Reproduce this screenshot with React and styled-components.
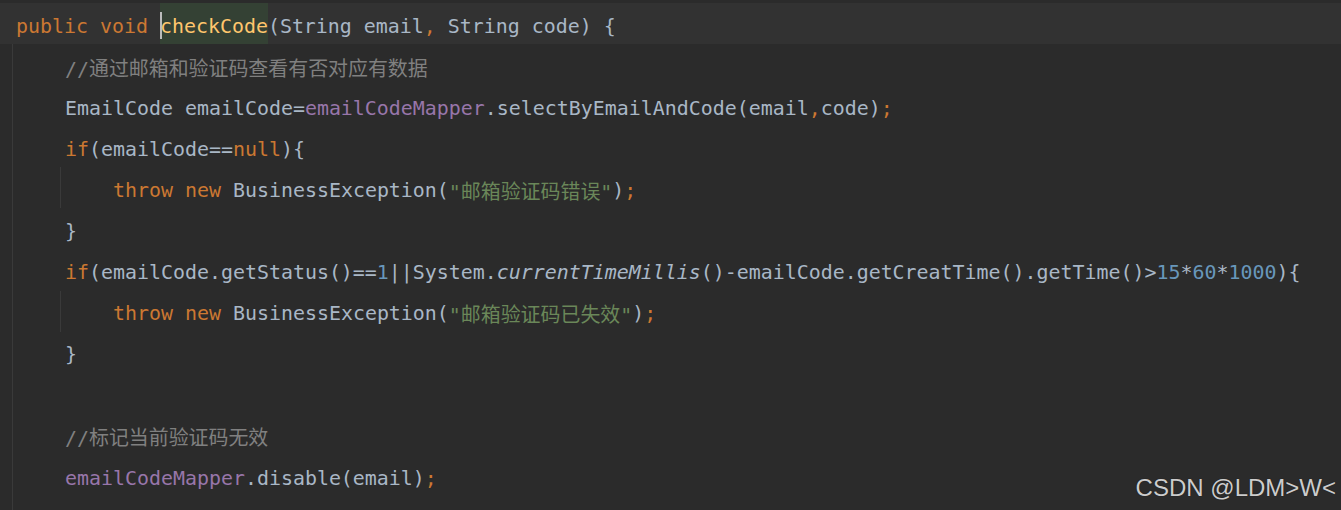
import React from "react";
import styled, { createGlobalStyle } from "styled-components";

const GlobalStyle = createGlobalStyle`
  html, body {
    margin: 0;
    padding: 0;
    background: #2b2b2b;
    overflow: hidden;
  }
`;

const colors = {
  kw: "#cc7832",
  txt: "#a9b7c6",
  fn: "#ffc66d",
  cmt: "#808080",
  str: "#6a8759",
  num: "#6897bb",
  field: "#9876aa",
};

function App() {
  return (
    <>
      <GlobalStyle />
      <Editor>
        <Line $pad={16} $current>
          <Tok $kind="kw">public void </Tok>
          <Caret />
          <Tok $kind="fn" $mark>checkCode</Tok>
          <Tok $kind="txt">(String email</Tok>
          <Tok $kind="kw">,</Tok>
          <Tok $kind="txt"> String code) {"{"}</Tok>
        </Line>
        <Body>
          <Line $pad={52}>
            <Tok $kind="cmt">//通过邮箱和验证码查看有否对应有数据</Tok>
          </Line>
          <Line $pad={52}>
            <Tok $kind="txt">EmailCode emailCode=</Tok>
            <Tok $kind="field">emailCodeMapper</Tok>
            <Tok $kind="txt">.selectByEmailAndCode(email</Tok>
            <Tok $kind="kw">,</Tok>
            <Tok $kind="txt">code)</Tok>
            <Tok $kind="kw">;</Tok>
          </Line>
          <Line $pad={52}>
            <Tok $kind="kw">if</Tok>
            <Tok $kind="txt">(emailCode==</Tok>
            <Tok $kind="kw">null</Tok>
            <Tok $kind="txt">){"{"}</Tok>
          </Line>
          <Block>
            <Line $pad={52}>
              <Tok $kind="kw">throw new </Tok>
              <Tok $kind="txt">BusinessException(</Tok>
              <Tok $kind="str">"邮箱验证码错误"</Tok>
              <Tok $kind="txt">)</Tok>
              <Tok $kind="kw">;</Tok>
            </Line>
          </Block>
          <Line $pad={52}>
            <Tok $kind="txt">{"}"}</Tok>
          </Line>
          <Line $pad={52}>
            <Tok $kind="kw">if</Tok>
            <Tok $kind="txt">(emailCode.getStatus()==</Tok>
            <Tok $kind="num">1</Tok>
            <Tok $kind="txt">||System.</Tok>
            <Tok $kind="txt" $italic>currentTimeMillis</Tok>
            <Tok $kind="txt">()-emailCode.getCreatTime().getTime()&gt;</Tok>
            <Tok $kind="num">15</Tok>
            <Tok $kind="txt">*</Tok>
            <Tok $kind="num">60</Tok>
            <Tok $kind="txt">*</Tok>
            <Tok $kind="num">1000</Tok>
            <Tok $kind="txt">){"{"}</Tok>
          </Line>
          <Block>
            <Line $pad={52}>
              <Tok $kind="kw">throw new </Tok>
              <Tok $kind="txt">BusinessException(</Tok>
              <Tok $kind="str">"邮箱验证码已失效"</Tok>
              <Tok $kind="txt">)</Tok>
              <Tok $kind="kw">;</Tok>
            </Line>
          </Block>
          <Line $pad={52}>
            <Tok $kind="txt">{"}"}</Tok>
          </Line>
          <Line $pad={52} />
          <Line $pad={52}>
            <Tok $kind="cmt">//标记当前验证码无效</Tok>
          </Line>
          <Line $pad={52}>
            <Tok $kind="field">emailCodeMapper</Tok>
            <Tok $kind="txt">.disable(email)</Tok>
            <Tok $kind="kw">;</Tok>
          </Line>
        </Body>
        <Watermark>CSDN @LDM&gt;W&lt;</Watermark>
      </Editor>
    </>
  );
}

export default App;

const Editor = styled.div`
  position: relative;
  width: 1341px;
  height: 510px;
  padding-top: 3px;
  box-sizing: border-box;
  background: #2b2b2b;
  font-family: "DejaVu Sans Mono", "Noto Sans CJK SC", monospace;
  font-size: 19.93px;
  color: #a9b7c6;
  overflow: hidden;
`;

const Line = styled.div`
  display: flex;
  align-items: stretch;
  height: 41.1px;
  box-sizing: border-box;
  padding-left: ${(p) => p.$pad}px;
  white-space: pre;
  background: ${(p) => (p.$current ? "#323232" : "transparent")};
`;

const Tok = styled.span`
  display: inline-flex;
  align-items: center;
  padding-top: 5px;
  color: ${(p) => colors[p.$kind]};
  font-style: ${(p) => (p.$italic ? "italic" : "normal")};
  background: ${(p) => (p.$mark ? "#344134" : "transparent")};
`;

const Caret = styled.span`
  align-self: center;
  width: 2px;
  height: 27px;
  margin-top: 4px;
  margin-right: -2px;
  background: #bbbbbb;
  position: relative;
  z-index: 1;
`;

const Body = styled.div`
  margin-left: 12px;
  border-left: 1px solid #3a3a3a;
  padding-bottom: 30px;
`;

const Block = styled.div`
  margin-left: 47px;
  border-left: 1px solid #3a3a3a;
`;

const Watermark = styled.div`
  position: absolute;
  right: 5px;
  bottom: 8px;
  font-family: "Liberation Sans", Arial, sans-serif;
  font-size: 24px;
  color: #cccccc;
  text-shadow: 0 0 1px rgba(0, 0, 0, 0.6);
`;
